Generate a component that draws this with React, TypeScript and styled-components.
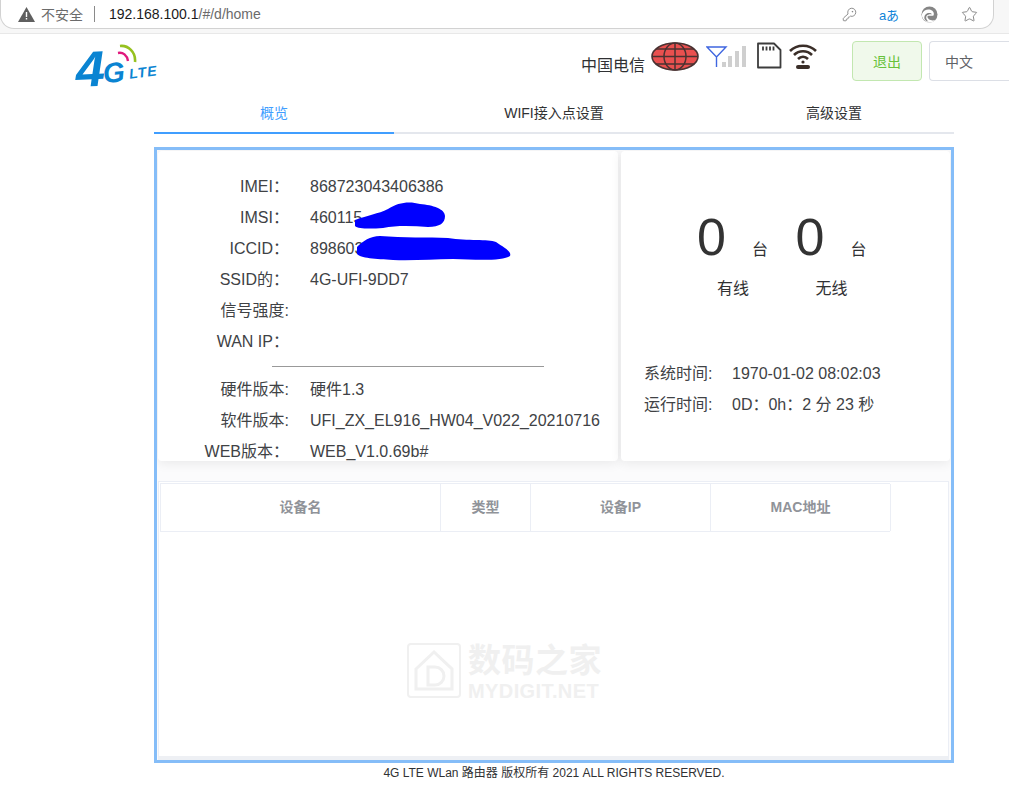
import React from "react";
import styled, { createGlobalStyle } from "styled-components";
import { KeyRound, Star } from "lucide-react";

const CJK = `"Liberation Sans", "Noto Sans CJK SC", sans-serif`;

const Global = createGlobalStyle`
  html, body { margin: 0; padding: 0; background: #fff; overflow: hidden; }
  body { font-family: ${CJK}; color: #303133; }
  * { box-sizing: border-box; }
`;

const Page = styled.div`
  width: 1009px;
  height: 793px;
  overflow: hidden;
`;

/* browser chrome */
const Chrome = styled.div`
  height: 34px;
  background: #f7f7f7;
  border-bottom: 1px solid #e8e8e8;
  padding-right: 15px;
`;
const UrlPill = styled.div`
  height: 29px;
  background: #fff;
  border: 1px solid #d2d2d2;
  border-top: none;
  border-radius: 0 0 14px 14px;
  display: flex;
  align-items: center;
  padding: 0 4px 0 17px;
  font-size: 14px;
  color: #6b6b6b;
`;
const Warn = styled.svg`
  width: 17px;
  height: 15px;
  margin-right: 6px;
`;
const Divider = styled.span`
  width: 1px;
  height: 16px;
  background: #8a8a8a;
  margin: 0 14px 0 11px;
`;
const UrlHost = styled.span`
  color: #1a1a1a;
`;
const ChromeIcons = styled.div`
  margin-left: auto;
  display: flex;
  align-items: center;
  color: #808080;
`;
const IconSlot = styled.span`
  width: 40px;
  display: flex;
  justify-content: center;
  align-items: center;
  white-space: nowrap;
`;
const Translate = styled.span`
  font-size: 13px;
  color: #1083d8;
  white-space: nowrap;
`;

/* header */
const Header = styled.header`
  height: 60px;
  display: flex;
  padding-left: 77px;
`;
const Logo = styled.div`
  position: relative;
  width: 85px;
  height: 48px;
  margin-top: 10px;
  color: #0a84d2;
  font-weight: 700;
  font-style: italic;
  font-family: "Liberation Sans", sans-serif;
`;
const LogoFour = styled.span`
  position: absolute;
  left: 0;
  top: 1px;
  font-size: 50px;
  line-height: 50px;
  transform: scaleX(1.05) rotate(-3deg);
  transform-origin: left bottom;
`;
const LogoG = styled.span`
  position: absolute;
  left: 26px;
  top: 15px;
  font-size: 28px;
  line-height: 28px;
  transform: rotate(-5deg);
`;
const LogoLte = styled.span`
  position: absolute;
  left: 52px;
  top: 21px;
  font-size: 14px;
  line-height: 14px;
  letter-spacing: 1px;
  transform: rotate(-7deg);
`;
const LogoArcs = styled.svg`
  position: absolute;
  left: 38px;
  top: 0;
  width: 30px;
  height: 24px;
`;
const HeaderRight = styled.div`
  margin-left: auto;
  display: flex;
  align-items: flex-start;
`;
const Carrier = styled.span`
  font-size: 16px;
  line-height: 20px;
  margin-top: 22px;
  margin-right: 6px;
  color: #303133;
`;
const StatusIcon = styled.svg<{ $mt: number; $mr: number }>`
  margin-top: ${(p) => p.$mt}px;
  margin-right: ${(p) => p.$mr}px;
  flex: none;
`;
const LogoutButton = styled.div`
  width: 70px;
  height: 40px;
  margin-top: 7px;
  margin-right: 7px;
  padding-bottom: 1px;
  border: 1px solid #c2e7b0;
  border-radius: 4px;
  background: #f0f9eb;
  color: #67c23a;
  font-size: 14px;
  display: flex;
  align-items: center;
  justify-content: center;
`;
const LangSelect = styled.div`
  width: 80px;
  height: 40px;
  margin-top: 7px;
  border: 1px solid #dcdfe6;
  border-right: none;
  border-radius: 4px 0 0 4px;
  color: #606266;
  font-size: 14px;
  display: flex;
  align-items: center;
  padding-left: 15px;
`;

/* tabs */
const Main = styled.main`
  width: 800px;
  margin-left: 154px;
`;
const Tabs = styled.nav`
  display: grid;
  grid-template-columns: 240px 320px 240px;
  height: 40px;
  border-bottom: 2px solid #e4e7ed;
`;
const Tab = styled.div<{ $active?: boolean }>`
  height: 40px;
  line-height: 38px;
  text-align: center;
  font-size: 14px;
  color: ${(p) => (p.$active ? "#409eff" : "#303133")};
  border-bottom: ${(p) => (p.$active ? "2px solid #409eff" : "none")};
`;

/* panel */
const Panel = styled.section`
  margin-top: 13px;
  height: 616px;
  border: 3px solid #85bdf8;
  background: #fbfbfc;
  padding: 1px 1px 0;
  display: flex;
  flex-direction: column;
  overflow: hidden;
`;
const TopRow = styled.div`
  display: flex;
  gap: 3px;
  height: 310px;
  flex: none;
`;
const Card = styled.div<{ $w: number }>`
  width: ${(p) => p.$w}px;
  background: #fff;
  border-radius: 4px;
  box-shadow: 0 2px 12px rgba(0, 0, 0, 0.08);
  position: relative;
  flex: none;
`;
const InfoCard = styled(Card)`
  padding-top: 20px;
`;
const InfoRow = styled.div`
  display: flex;
  height: 31px;
  line-height: 31px;
  align-items: baseline;
  font-size: 16px;
  color: #404245;
`;
const InfoLabel = styled.span`
  width: 131px;
  text-align: right;
  margin-right: 21px;
  white-space: nowrap;
`;
const Rule = styled.hr`
  width: 272px;
  margin: 9px 0 7px 114px;
  border: none;
  border-top: 1px solid #999;
  height: 1px;
`;
const Scribble = styled.svg`
  position: absolute;
  left: 190px;
  top: 50px;
  width: 170px;
  height: 62px;
`;

const StatsCard = styled(Card)`
  padding-top: 60px;
`;
const Counters = styled.div`
  display: flex;
  padding-left: 76px;
`;
const Counter = styled.div`
  width: 98.5px;
`;
const CountLine = styled.div`
  height: 52px;
  display: flex;
  align-items: flex-end;
  line-height: 52px;
`;
const Count = styled.span`
  font-size: 52px;
  color: #333;
  width: 55px;
`;
const Unit = styled.span`
  font-size: 16px;
  line-height: 20px;
  margin-bottom: 3px;
  color: #303133;
`;
const CountName = styled.div`
  font-size: 16px;
  line-height: 20px;
  margin: 16px 0 0 20px;
  color: #303133;
`;
const TimeBlock = styled.div`
  margin-top: 59px;
  padding-left: 23px;
`;
const TimeRow = styled.div`
  display: flex;
  height: 31px;
  line-height: 31px;
  align-items: baseline;
  font-size: 16px;
  color: #404245;
`;
const TimeLabel = styled.span`
  width: 88px;
  white-space: nowrap;
`;

/* table */
const TableBox = styled.div`
  position: relative;
  margin-top: 20px;
  margin-right: 1px;
  flex: 1;
  background: #fff;
  border: 1px solid #ebeef5;
  border-bottom: 4px solid #eef0f4;
  padding: 1px 0 0 1px;
`;
const HeadRow = styled.div`
  display: grid;
  grid-template-columns: 280px 90px 180px 180px;
  width: 730px;
  height: 49px;
  border: 1px solid #ebeef5;
  border-right: none;
`;
const HeadCell = styled.div`
  display: flex;
  align-items: center;
  justify-content: center;
  padding-bottom: 3px;
  font-size: 14px;
  font-weight: 700;
  color: #909399;
  border-right: 1px solid #ebeef5;
`;
const Watermark = styled.div`
  position: absolute;
  left: 248px;
  top: 161px;
  display: flex;
  gap: 7px;
  color: #f0f0f0;
  font-weight: 700;
`;
const WatermarkIcon = styled.svg`
  width: 54px;
  height: 55px;
`;
const WatermarkText = styled.div`
  display: flex;
  flex-direction: column;
`;
const WatermarkCn = styled.span`
  font-size: 33px;
  line-height: 36px;
  white-space: nowrap;
  letter-spacing: 0.5px;
`;
const WatermarkEn = styled.span`
  font-size: 20px;
  line-height: 20px;
  margin-top: 2px;
  white-space: nowrap;
  letter-spacing: 0.4px;
`;

const Footer = styled.footer`
  text-align: center;
  font-size: 12px;
  line-height: 20px;
  color: #303133;
  white-space: nowrap;
`;

const infoTop = [
  ["IMEI：", "868723043406386"],
  ["IMSI：", "460115"],
  ["ICCID：", "898603"],
  ["SSID的：", "4G-UFI-9DD7"],
  ["信号强度:", ""],
  ["WAN IP：", ""],
];
const infoBottom = [
  ["硬件版本:", "硬件1.3"],
  ["软件版本:", "UFI_ZX_EL916_HW04_V022_20210716"],
  ["WEB版本：", "WEB_V1.0.69b#"],
];

const Globe = () => (
  <StatusIcon $mt={8} $mr={7} width="48" height="29" viewBox="0 0 48 29">
    <ellipse cx="24" cy="14.5" rx="23" ry="13.5" fill="#e9504f" stroke="#4a3232" strokeWidth="1.6" />
    <ellipse cx="24" cy="14.5" rx="11" ry="13.5" fill="none" stroke="#4a3232" strokeWidth="1.5" />
    <path d="M24 1v27M1 14.5h46M5 7h38M5 22h38" stroke="#4a3232" strokeWidth="1.5" fill="none" />
  </StatusIcon>
);

const Signal = () => (
  <StatusIcon $mt={11} $mr={10} width="40" height="22" viewBox="0 0 40 22">
    <path d="M1 2h19L10.5 12zM10.5 12v10" fill="none" stroke="#3f66e0" strokeWidth="1.4" />
    <rect x="16" y="17" width="4" height="5" fill="#cfcfcf" />
    <rect x="22" y="11" width="4" height="11" fill="#cfcfcf" />
    <rect x="29" y="6" width="4" height="16" fill="#cfcfcf" />
    <rect x="36" y="1" width="4" height="21" fill="#cfcfcf" />
  </StatusIcon>
);

const SdCard = () => (
  <StatusIcon $mt={8} $mr={7} width="26" height="27" viewBox="0 0 26 27">
    <path d="M2 1.5h16l6.5 6.5v17.5H2z" fill="#fff" stroke="#3c3c3c" strokeWidth="1.8" strokeLinejoin="round" />
    <path d="M7 4.5v4M10.5 4.5v4M14 4.5v4M17.5 4.5v4" stroke="#3c3c3c" strokeWidth="1.8" />
  </StatusIcon>
);

const Wifi = () => (
  <StatusIcon $mt={9} $mr={35} width="28" height="26" viewBox="0 0 28 26">
    <path d="M1 8C8 1 20 1 27 8M5 12c5-5 13-5 18 0M9 16c3-3 7-3 10 0" fill="none" stroke="#3a2e28" strokeWidth="2.6" />
    <circle cx="14" cy="19" r="1.6" fill="#3a2e28" />
    <rect x="7" y="22" width="14" height="4" rx="2" fill="#3a2e28" />
  </StatusIcon>
);

const EdgeMark = () => (
  <svg width="17" height="17" viewBox="0 0 17 17">
    <circle cx="8.5" cy="8.5" r="8" fill="#858585" />
    <path d="M1 8C2.500 4 6.500 2.800 9.500 3.800C12.500 5 13.500 7.500 12.500 9.500C10.500 10 7 9.200 6.500 10.500C6.300 13 10 15.500 14.500 14C11 17 7.500 17 5 15.500C2 14 0.500 11 1 8Z" fill="#fff" />
    <path d="M3.500 13C2.800 9.500 5 7 8 7C9.500 7 10.500 7.500 11 8.300C9 8 6.500 8.300 5.500 10C4.800 11.500 5.200 14 7.500 15.500C5.500 15.500 4.200 14.500 3.500 13Z" fill="#858585" />
  </svg>
);

export default function App() {
  return (
    <Page>
      <Global />
      <Chrome>
        <UrlPill>
          <Warn viewBox="0 0 17 15">
            <path d="M8.5 0 17 15H0z" fill="#5f5f5f" />
            <path d="M7.800 5h1.400v5H7.800zM7.800 11h1.400v1.600H7.800z" fill="#fff" />
          </Warn>
          不安全
          <Divider />
          <UrlHost>192.168.100.1</UrlHost>/#/d/home
          <ChromeIcons>
            <IconSlot>
              <KeyRound size={15} strokeWidth={1.4} />
            </IconSlot>
            <IconSlot>
              <Translate>aあ</Translate>
            </IconSlot>
            <IconSlot>
              <EdgeMark />
            </IconSlot>
            <IconSlot>
              <Star size={17} strokeWidth={1.3} />
            </IconSlot>
          </ChromeIcons>
        </UrlPill>
      </Chrome>

      <Header>
        <Logo>
          <LogoFour>4</LogoFour>
          <LogoG>G</LogoG>
          <LogoLte>LTE</LogoLte>
          <LogoArcs viewBox="0 0 30 24">
            <path d="M3 9c5-1 9 2 10 8" fill="none" stroke="#e0197d" strokeWidth="2.4" />
            <path d="M5 2c8-1 16 6 15 16" fill="none" stroke="#96c11f" strokeWidth="2.6" />
          </LogoArcs>
        </Logo>
        <HeaderRight>
          <Carrier>中国电信</Carrier>
          <Globe />
          <Signal />
          <SdCard />
          <Wifi />
          <LogoutButton>退出</LogoutButton>
          <LangSelect>中文</LangSelect>
        </HeaderRight>
      </Header>

      <Main>
        <Tabs>
          <Tab $active>概览</Tab>
          <Tab>WIFI接入点设置</Tab>
          <Tab>高级设置</Tab>
        </Tabs>
        <Panel>
          <TopRow>
            <InfoCard $w={460}>
              {infoTop.map(([k, v]) => (
                <InfoRow key={k}>
                  <InfoLabel>{k}</InfoLabel>
                  <span>{v}</span>
                </InfoRow>
              ))}
              <Rule />
              {infoBottom.map(([k, v]) => (
                <InfoRow key={k}>
                  <InfoLabel>{k}</InfoLabel>
                  <span>{v}</span>
                </InfoRow>
              ))}
              <Scribble viewBox="0 0 170 62">
                <path
                  d="M7 19C20 14 30 13 40 8C50 1 62 0 72 3C85 4 97 8 97 15C97 22 92 26 80 26C65 25 50 24 35 27C22 28 10 28 7 25Z"
                  fill="#0000ff"
                />
                <path
                  d="M9 46C15 40 22 35 32 35C55 37 80 36 100 37C120 40 140 38 148 41C155 46 164 50 162 55C155 60 130 59 105 58C85 58 65 60 45 59C28 58 12 57 9 53Z"
                  fill="#0000ff"
                />
              </Scribble>
            </InfoCard>
            <StatsCard $w={329}>
              <Counters>
                <Counter>
                  <CountLine>
                    <Count>0</Count>
                    <Unit>台</Unit>
                  </CountLine>
                  <CountName>有线</CountName>
                </Counter>
                <Counter>
                  <CountLine>
                    <Count>0</Count>
                    <Unit>台</Unit>
                  </CountLine>
                  <CountName>无线</CountName>
                </Counter>
              </Counters>
              <TimeBlock>
                <TimeRow>
                  <TimeLabel>系统时间:</TimeLabel>
                  <span>1970-01-02 08:02:03</span>
                </TimeRow>
                <TimeRow>
                  <TimeLabel>运行时间:</TimeLabel>
                  <span>0D：0h：2 分 23 秒</span>
                </TimeRow>
              </TimeBlock>
            </StatsCard>
          </TopRow>
          <TableBox>
            <HeadRow>
              <HeadCell>设备名</HeadCell>
              <HeadCell>类型</HeadCell>
              <HeadCell>设备IP</HeadCell>
              <HeadCell>MAC地址</HeadCell>
            </HeadRow>
            <Watermark>
              <WatermarkIcon viewBox="0 0 54 55">
                <rect x="1" y="1" width="52" height="53" rx="3" fill="none" stroke="#f0f0f0" strokeWidth="2" />
                <path d="M9 26 27 9l18 17v20H9z" fill="none" stroke="#f0f0f0" strokeWidth="3" />
                <path d="M21 24h7a8 8 0 0 1 0 18h-7z" fill="none" stroke="#f0f0f0" strokeWidth="3" />
              </WatermarkIcon>
              <WatermarkText>
                <WatermarkCn>数码之家</WatermarkCn>
                <WatermarkEn>MYDIGIT.NET</WatermarkEn>
              </WatermarkText>
            </Watermark>
          </TableBox>
        </Panel>
        <Footer>4G LTE WLan 路由器 版权所有 2021 ALL RIGHTS RESERVED.</Footer>
      </Main>
    </Page>
  );
}
